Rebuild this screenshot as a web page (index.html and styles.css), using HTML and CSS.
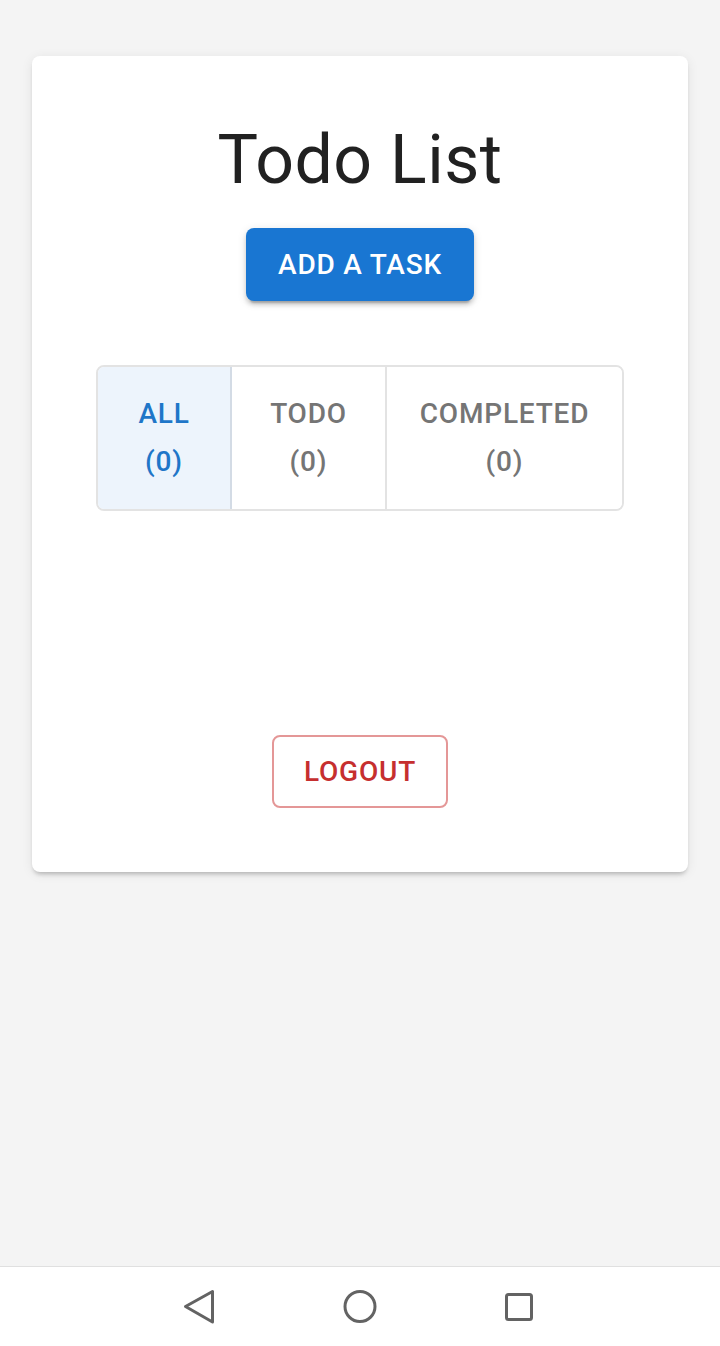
FILE: index.html
```html
<!DOCTYPE html>
<html lang="en">
<head>
<meta charset="utf-8">
<title>Todo List</title>
<link rel="stylesheet" href="styles.css">
</head>
<body>
<main class="screen">
  <section class="card">
    <h1 class="title">Todo List</h1>
    <button class="btn-add" type="button">Add a task</button>
    <div class="toggle-group">
      <button class="toggle toggle-all selected" type="button"><span>All</span><span>(0)</span></button>
      <button class="toggle toggle-todo" type="button"><span>Todo</span><span>(0)</span></button>
      <button class="toggle toggle-completed" type="button"><span>Completed</span><span>(0)</span></button>
    </div>
    <button class="btn-logout" type="button">Logout</button>
  </section>
</main>
<nav class="navbar">
  <svg class="nav-icon" viewBox="0 0 40 40" width="40" height="40"><polygon points="5.5,19.5 32.5,4.5 32.5,35" fill="none" stroke="#636363" stroke-width="3" stroke-linejoin="round"/></svg>
  <svg class="nav-icon" viewBox="0 0 40 40" width="40" height="40"><circle cx="20" cy="19.5" r="15" fill="none" stroke="#636363" stroke-width="3"/></svg>
  <svg class="nav-icon" viewBox="0 0 40 40" width="40" height="40"><rect x="6.5" y="7.5" width="25" height="25" rx="2" fill="none" stroke="#636363" stroke-width="3"/></svg>
</nav>
</body>
</html>
```

FILE: styles.css
```css
* { box-sizing: border-box; }
html, body { margin: 0; padding: 0; }
body {
  width: 720px;
  min-height: 1346px;
  background: #f4f4f4;
  font-family: Roboto, "Liberation Sans", sans-serif;
  display: flex;
  flex-direction: column;
}
.screen {
  flex: 1;
  padding: 56px 32px 0;
}
.card {
  background: #fff;
  border-radius: 8px;
  box-shadow: 0 4px 4px -2px rgba(0,0,0,0.22), 0 2px 12px rgba(0,0,0,0.08);
  padding: 62px 0 64px;
  display: flex;
  flex-direction: column;
  align-items: center;
}
.title {
  margin: 0;
  font-size: 68px;
  font-weight: 400;
  line-height: 84px;
  letter-spacing: 0.5px;
  color: #212121;
}
.btn-add {
  margin-top: 26px;
  border: 0;
  border-radius: 8px;
  background: #1976d2;
  color: #fff;
  font-family: inherit;
  font-size: 28px;
  font-weight: 500;
  line-height: 49px;
  letter-spacing: 0.8px;
  text-transform: uppercase;
  padding: 12px 32px;
  box-shadow: 0 6px 2px -4px rgba(0,0,0,0.2), 0 4px 4px rgba(0,0,0,0.14), 0 2px 10px rgba(0,0,0,0.12);
}
.toggle-group {
  margin-top: 64px;
  display: flex;
  width: 528px;
  border: 2px solid #e3e3e3;
  border-radius: 8px;
  overflow: hidden;
}
.toggle {
  display: flex;
  flex-direction: column;
  align-items: center;
  border: 0;
  background: #fff;
  font-family: inherit;
  font-size: 28px;
  font-weight: 500;
  line-height: 48px;
  letter-spacing: 0.8px;
  text-transform: uppercase;
  color: #757575;
  padding: 23px 0;
}
.toggle + .toggle { border-left: 2px solid #e3e3e3; }
.toggle-all { width: 132px; }
.toggle-todo { width: 155px; }
.toggle-completed { flex: 1; }
.toggle.selected {
  background: #edf4fc;
  color: #1f76c8;
}
.toggle.selected + .toggle { border-left-color: #d3dbe5; }
.btn-logout {
  margin-top: 224px;
  background: #fff;
  border: 2px solid #e49797;
  border-radius: 8px;
  color: #c62f2f;
  font-family: inherit;
  font-size: 28px;
  font-weight: 500;
  line-height: 49px;
  letter-spacing: 0.8px;
  text-transform: uppercase;
  padding: 10px 30px;
}
.navbar {
  height: 80px;
  background: #fff;
  border-top: 1px solid #e0e0e0;
  display: grid;
  grid-template-columns: repeat(3, 160px);
  justify-content: center;
  justify-items: center;
  align-items: center;
}
.nav-icon { display: block; }
```
